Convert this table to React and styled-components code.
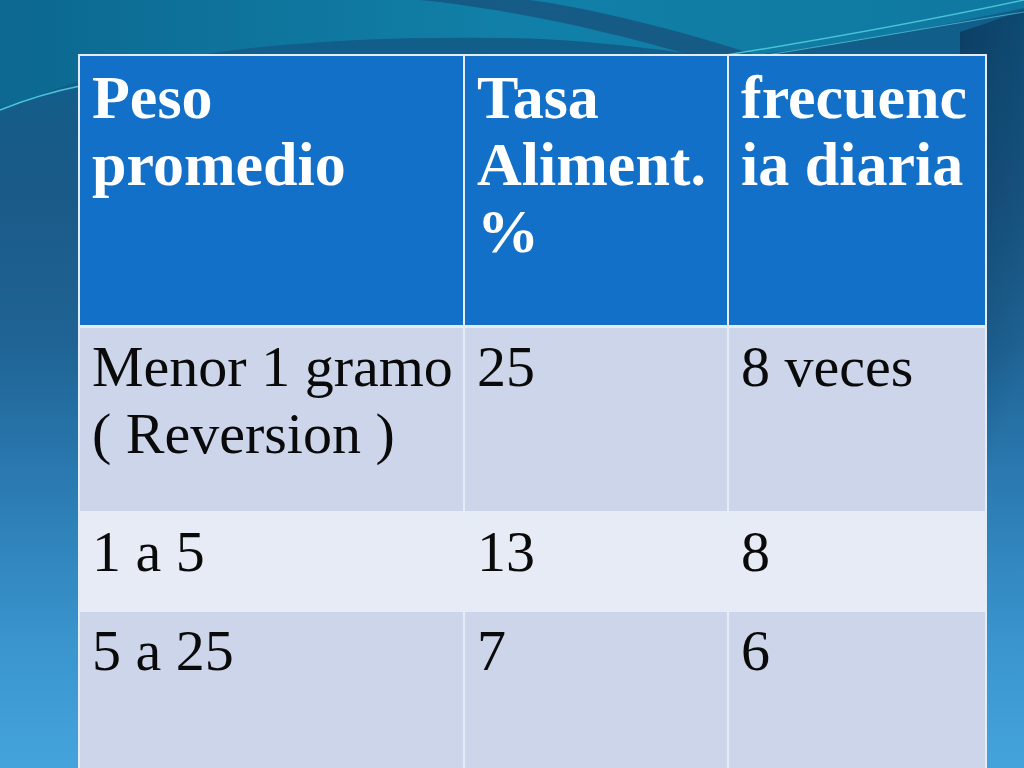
import React from "react";
import styled, { createGlobalStyle } from "styled-components";

const GlobalStyle = createGlobalStyle`
  html, body {
    margin: 0;
    padding: 0;
  }
  body {
    font-family: "Liberation Serif", "DejaVu Serif", serif;
  }
`;

const Slide = styled.div`
  position: relative;
  width: 1024px;
  height: 768px;
  overflow: hidden;
  background: linear-gradient(180deg, #0f5f8a 0%, #1a5a88 25%, #1f6495 45%, #2c7db5 65%, #3b96cf 85%, #45a3dc 100%);
`;

const Backdrop = styled.svg`
  position: absolute;
  left: 0;
  top: 0;
  width: 1024px;
  height: 768px;
  z-index: 0;
`;

const Content = styled.div`
  position: relative;
  z-index: 1;
  padding: 54px 0 0 78px;
`;

const Table = styled.div`
  display: grid;
  grid-template-columns: 383px 262px 256px;
  grid-template-rows: 270px 183px 97px 200px;
  gap: 2px;
  padding: 2px;
  width: max-content;
  background: #e4edf7;
`;

const Cell = styled.div`
  box-sizing: border-box;
  padding: ${(p) => (p.$head ? "8px 0 0 12px" : "5px 0 0 12px")};
  background: ${(p) => p.$bg};
  color: ${(p) => (p.$head ? "#ffffff" : "#0a0a0a")};
  font-size: ${(p) => (p.$head ? "62px" : "58px")};
  line-height: 67px;
  font-weight: ${(p) => (p.$head ? 700 : 400)};
  white-space: nowrap;
  border-bottom: ${(p) => (p.$head ? "1px solid #e4edf7" : "none")};
`;

const Line = styled.span`
  display: block;
`;

const HEAD = "#1270c8";
const ODD = "#cdd5ea";
const EVEN = "#e7ebf6";

const header = [["Peso", "promedio"], ["Tasa", "Aliment.", "%"], ["frecuenc", "ia diaria"]];

const rows = [
  { bg: ODD, cells: [["Menor 1 gramo", "( Reversion )"], ["25"], ["8 veces"]] },
  { bg: EVEN, cells: [["1 a 5"], ["13"], ["8"]] },
  { bg: ODD, cells: [["5 a 25"], ["7"], ["6"]] },
];

const Waves = () => (
  <Backdrop viewBox="0 0 1024 768">
    <defs>
      <linearGradient id="teal" x1="0" y1="0" x2="1" y2="0">
        <stop offset="0" stopColor="#0c6890" />
        <stop offset="0.5" stopColor="#1180a8" />
        <stop offset="1" stopColor="#0f78a0" />
      </linearGradient>
      <linearGradient id="rightDark" x1="0" y1="0" x2="0.4" y2="1">
        <stop offset="0" stopColor="#0c3a60" stopOpacity="0.9" />
        <stop offset="1" stopColor="#0c3a60" stopOpacity="0" />
      </linearGradient>
    </defs>
    <path d="M1024,10 L1024,480 L960,480 L960,32 C980,26 1000,18 1024,10 Z" fill="url(#rightDark)" />
    <path
      d="M0,0 H1024 V8 C930,28 820,50 720,58 C640,46 560,38 500,38 C380,36 240,42 120,70 C70,82 30,98 0,110 Z"
      fill="url(#teal)"
    />
    <path d="M420,0 C500,8 600,28 700,58 L765,58 C680,30 590,8 530,0 Z" fill="#17527e" opacity="0.8" />
    <path d="M0,110 C30,98 60,90 80,86" stroke="#4fd0e0" strokeWidth="1.5" fill="none" opacity="0.9" />
    <path d="M720,56 C820,40 930,20 1024,0" stroke="#55d4e4" strokeWidth="1.5" fill="none" opacity="0.8" />
    <path d="M760,56 C850,42 950,24 1024,12" stroke="#6ad8e8" strokeWidth="1" fill="none" opacity="0.6" />
  </Backdrop>
);

const App = () => {
  return (
    <>
      <GlobalStyle />
      <Slide>
        <Waves />
        <Content>
          <Table>
            {header.map((lines, i) => (
              <Cell key={"h" + i} $head $bg={HEAD}>
                {lines.map((l) => (
                  <Line key={l}>{l}</Line>
                ))}
              </Cell>
            ))}
            {rows.map((row, r) =>
              row.cells.map((lines, c) => (
                <Cell key={r + "-" + c} $bg={row.bg}>
                  {lines.map((l) => (
                    <Line key={l}>{l}</Line>
                  ))}
                </Cell>
              ))
            )}
          </Table>
        </Content>
      </Slide>
    </>
  );
};

export default App;
